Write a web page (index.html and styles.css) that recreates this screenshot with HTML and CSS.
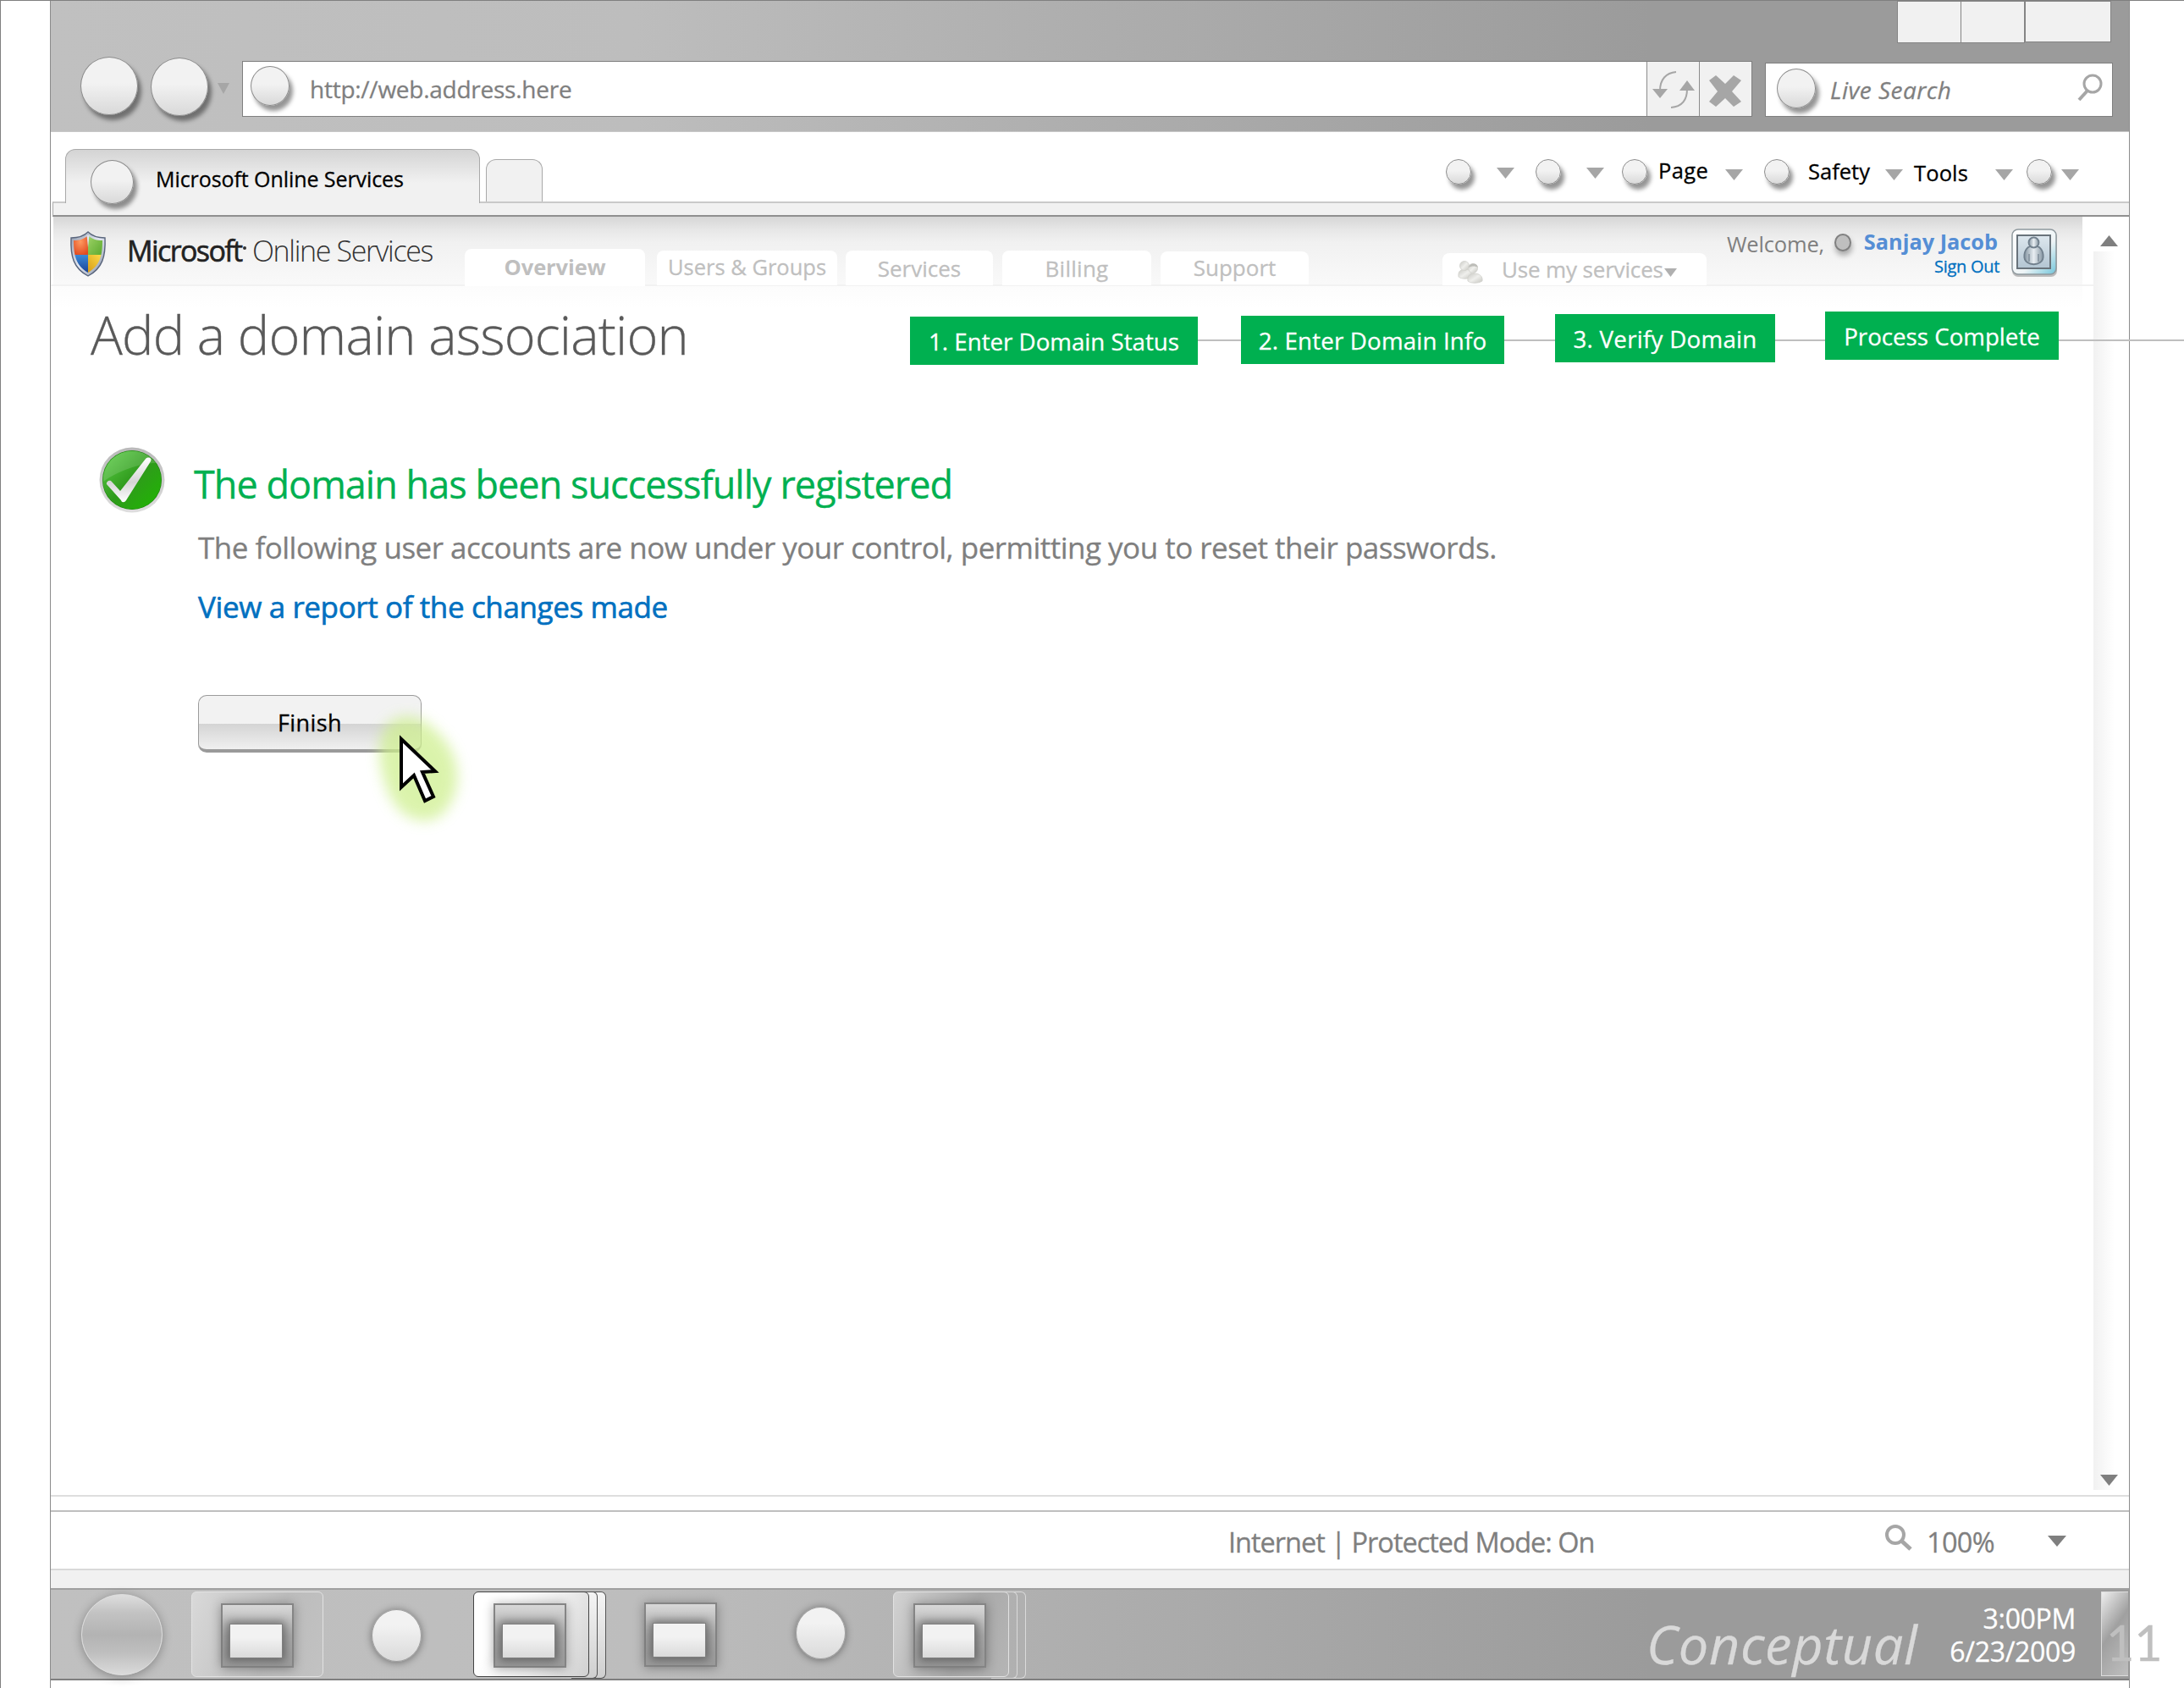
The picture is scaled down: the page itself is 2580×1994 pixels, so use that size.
FILE: index.html
```html
<!DOCTYPE html>
<html lang="en">
<head>
<meta charset="utf-8">
<title>Microsoft Online Services</title>
<link rel="stylesheet" href="styles.css">
</head>
<body>
<div class="window">
  <header class="chrome">
    <div class="caption-buttons"><i></i><i></i><i class="wide"></i></div>
    <div class="address-row">
      <i class="orb orb-nav back"></i>
      <i class="orb orb-nav forward"></i>
      <i class="tri nav-tri"></i>
      <div class="address">
        <i class="orb orb-field"></i>
        <span class="url">http://web.address.here</span>
        <div class="address-btn">
          <svg width="61" height="64" viewBox="0 0 61 64" fill="none" stroke="#a6a6a6" stroke-width="2"><path d="M34 12C22 13 15 21 15 34M28 54c13-1 19-9 19-22"/><path fill="#a6a6a6" stroke="none" d="M6 32h18l-9 11zM38 34h18l-9-12z"/></svg>
        </div>
        <div class="address-btn">
          <svg width="61" height="64" viewBox="0 0 61 64"><path d="M11 22l8-6 11 10 10-10 9 6-11 13 11 12-9 6-10-10-11 10-8-6 10-12z" fill="#a6a6a6"/></svg>
        </div>
      </div>
      <div class="search">
        <i class="orb orb-field"></i>
        <span class="search-text">Live Search</span>
        <svg class="search-icon" width="32" height="34" viewBox="0 0 32 34" fill="none" stroke="#a6a6a6"><circle cx="18" cy="12" r="10" stroke-width="3"/><path d="M12 20L2 31" stroke-width="4"/></svg>
      </div>
    </div>
  </header>

  <div class="tabbar">
    <div class="tab-active"><i class="orb orb-tab"></i><span class="tab-title">Microsoft Online Services</span></div>
    <div class="tab-new"></div>
    <div class="commands">
      <i class="orb orb-cmd c1"></i><i class="tri t1"></i>
      <i class="orb orb-cmd c2"></i><i class="tri t2"></i>
      <i class="orb orb-cmd c3"></i><span class="cmd page">Page</span><i class="tri t3"></i>
      <i class="orb orb-cmd c4"></i><span class="cmd safety">Safety</span><i class="tri t4"></i>
      <span class="cmd tools">Tools</span><i class="tri t5"></i>
      <i class="orb orb-cmd c5"></i><i class="tri t6"></i>
    </div>
  </div>
  <div class="strip"></div>

  <div class="viewport">
    <div class="page-col">
      <div class="site-header">
        <svg class="shield" width="44" height="54" viewBox="0 0 44 54">
          <defs>
            <clipPath id="sh"><path d="M22 5c5 5 11 6 17 6 0 18-3 30-17 38C8 41 5 29 5 11c6 0 12-1 17-6z"/></clipPath>
            <linearGradient id="rim" x1="0" y1="0" x2="1" y2="1"><stop offset="0" stop-color="#8f98ab"/><stop offset=".5" stop-color="#e4e9f3"/><stop offset="1" stop-color="#7d889d"/></linearGradient>
            <radialGradient id="red" cx=".5" cy=".35" r=".7"><stop offset="0" stop-color="#ff9a60"/><stop offset="1" stop-color="#e04a20"/></radialGradient>
            <linearGradient id="blu" x1="0" y1="0" x2="0" y2="1"><stop offset="0" stop-color="#3a8ad8"/><stop offset="1" stop-color="#1a3f93"/></linearGradient>
            <linearGradient id="yel" x1="1" y1="0" x2="0" y2="1"><stop offset="0" stop-color="#ffe04a"/><stop offset="1" stop-color="#d69a18"/></linearGradient>
            <linearGradient id="grn" x1="0" y1="0" x2="1" y2="1"><stop offset="0" stop-color="#a0d468"/><stop offset="1" stop-color="#5aa82e"/></linearGradient>
          </defs>
          <path d="M22 1c6 6 13 7 20 7 1 22-3 36-20 45C5 44 1 30 2 8c7 0 14-1 20-7z" fill="url(#rim)" stroke="#59657c" stroke-width="1.4"/>
          <g clip-path="url(#sh)"><path fill="url(#red)" d="M4 4h18v24H4z"/><path fill="url(#grn)" d="M22 4h18v24H22z"/><path fill="url(#blu)" d="M4 28h18v22H4z"/><path fill="url(#yel)" d="M22 28h18v22H22z"/></g>
          <path d="M20.500 5h3l-1.500 14z" fill="#dfe5ef"/>
        </svg>
        <span class="brand-ms">Microsoft</span>
        <span class="brand-os">Online Services</span>
        <nav class="site-tabs">
          <span class="stab overview"><span>Overview</span></span>
          <span class="stab users"><span>Users &amp; Groups</span></span>
          <span class="stab services"><span>Services</span></span>
          <span class="stab billing"><span>Billing</span></span>
          <span class="stab support"><span>Support</span></span>
        </nav>
        <div class="stab mine">
          <svg width="32" height="28" viewBox="0 0 32 28">
            <defs><linearGradient id="ppl" x1="0" y1="0" x2="1" y2="1"><stop offset="0" stop-color="#c8c8c3"/><stop offset=".5" stop-color="#efefec"/><stop offset="1" stop-color="#c6c6c0"/></linearGradient></defs>
            <g fill="url(#ppl)" stroke="#d0d0cb" stroke-width=".8"><path d="M2 20c-1-7 3-9 8-9s8 2 8 9c-5 3-12 3-16 0z"/><circle cx="9" cy="7" r="5.500"/><path d="M13 25c-1-7 3-9 8-9s10 3 9 9c-5 3-13 3-17 0z"/><circle cx="19" cy="10" r="5.500"/></g>
            <path d="M14 9c0-5 10-7 11 0-3-2-8-2-11 0z" fill="#bdbdb8"/>
          </svg>
          <span>Use my services</span><i class="tri tri-mine"></i>
        </div>
        <span class="welcome">Welcome,</span>
        <i class="presence"></i>
        <div class="who"><span class="who-name">Sanjay Jacob</span><span class="signout">Sign Out</span></div>
        <svg class="avatar" width="58" height="60" viewBox="0 0 58 60">
          <defs>
            <linearGradient id="av" x1="0" y1="0" x2="1" y2="1"><stop offset="0" stop-color="#fff"/><stop offset=".6" stop-color="#eef4f6"/><stop offset="1" stop-color="#6fc4da"/></linearGradient>
            <linearGradient id="avb" x1="0" y1="0" x2="0" y2="1"><stop offset="0" stop-color="#dde7ee"/><stop offset="1" stop-color="#b3c5d2"/></linearGradient>
            <linearGradient id="avp" x1="0" y1="0" x2="1" y2="0"><stop offset="0" stop-color="#8494a1"/><stop offset=".5" stop-color="#e8eef2"/><stop offset="1" stop-color="#8494a1"/></linearGradient>
          </defs>
          <rect x="2" y="3" width="53" height="55" rx="7" fill="#bdbdbd"/>
          <rect x="2" y="2" width="52" height="53" rx="7" fill="url(#av)" stroke="#8f999e" stroke-width="1.500"/>
          <rect x="8" y="9" width="39" height="39" fill="url(#avb)" stroke="#69737b" stroke-width="2"/>
          <g fill="url(#avp)" stroke="#71808d" stroke-width="1.800"><path d="M21 23c-5 4-7 14-1 18 4 3 11 3 15 0 6-4 4-14-1-18-4-2-9-2-13 0z"/><path d="M22 40V31M33 40V31" fill="none" stroke-width="1.200"/><circle cx="27.500" cy="17.500" r="6"/></g>
        </svg>
      </div>

      <div class="title-row">
        <h1>Add a domain association</h1>
        <div class="step s1"><span>1. Enter Domain Status</span></div>
        <div class="step s2"><span>2. Enter Domain Info</span></div>
        <div class="step s3"><span>3. Verify Domain</span></div>
        <div class="step s4"><span>Process Complete</span></div>
      </div>

      <main class="result">
        <svg class="ok" width="80" height="80" viewBox="0 0 80 80">
          <defs>
            <linearGradient id="g1" x1="0" y1="0" x2="1" y2="1"><stop offset="0" stop-color="#5fd04a"/><stop offset=".5" stop-color="#2f9a1c"/><stop offset="1" stop-color="#1fb800"/></linearGradient>
            <linearGradient id="g2" x1="0" y1="0" x2="0" y2="1"><stop offset="0" stop-color="#b9b9b9"/><stop offset="1" stop-color="#dedede"/></linearGradient>
            <linearGradient id="g3" x1="0" y1="0" x2="0" y2="1"><stop offset="0" stop-color="#fff"/><stop offset=".55" stop-color="#d5d5d5"/><stop offset="1" stop-color="#fff"/></linearGradient>
          </defs>
          <circle cx="39" cy="40" r="38.500" fill="url(#g2)"/><circle cx="39" cy="40" r="35" fill="#1b7d0c"/><circle cx="39" cy="40" r="34.500" fill="url(#g1)"/>
          <path d="M5 42C5 20 21 6 39 6c12 0 22 5 28 14C49 20 21 30 5 42z" fill="#fff" opacity=".14"/>
          <path d="M9 45c-1-3 4-6 6-3l10 11L55 15c3-3 8-1 6 3L32 64c-2 3-5 3-6 0z" fill="url(#g3)"/>
        </svg>
        <div class="result-body">
          <h2>The domain has been successfully registered</h2>
          <p class="sub">The following user accounts are now under your control, permitting you to reset their passwords.</p>
          <a class="report">View a report of the changes made</a>
          <button class="finish"><span>Finish</span></button>
        </div>
      </main>
    </div>
    <div class="scroll"><i class="up"></i><div class="track"></div><i class="down"></i></div>
  </div>

  <div class="gap"></div>
  <div class="status">
    <span class="zone">Internet | Protected Mode: On</span>
    <svg class="zoom-icon" width="34" height="32" viewBox="0 0 34 32" fill="none" stroke="#a6a6a6"><circle cx="13" cy="12" r="10" stroke-width="4"/><path d="M19 18l12 11" stroke-width="5"/></svg>
    <span class="zoom-level">100%</span>
    <i class="tri dark"></i>
  </div>
  <div class="band"></div>

  <footer class="taskbar">
    <i class="start"></i>
    <div class="task framed"><i class="app"><b></b></i></div>
    <i class="dot d1"></i>
    <div class="task stack active"><i class="app"><b></b></i></div>
    <i class="app bare"><b></b></i>
    <i class="dot d2"></i>
    <div class="task stack"><i class="app"><b></b></i></div>
    <span class="conceptual">Conceptual</span>
    <div class="clock"><span class="time">3:00PM</span><span class="date">6/23/2009</span></div>
    <i class="desktop"></i>
  </footer>
</div>
<i class="connector"></i>
<svg class="cursor" width="140" height="180" viewBox="0 0 140 180">
  <defs><filter id="soft" x="-40%" y="-40%" width="180%" height="180%"><feGaussianBlur stdDeviation="8"/></filter></defs>
  <path d="M30 24C52 6 78 22 95 44s22 54 4 80-50 16-64-6S8 44 30 24z" fill="#cdef8c" opacity=".72" filter="url(#soft)"/>
  <path d="M44 43v57l15-14 13 30 10-5-13-29 15-1z" fill="#fff" stroke="#000" stroke-width="4"/>
</svg>
<span class="page-number">11</span>
</body>
</html>
```
FILE: styles.css
```css
* { box-sizing: border-box; }
html, body { margin: 0; padding: 0; }
body {
  position: relative;
  width: 2580px;
  height: 1994px;
  overflow: hidden;
  background: #fff;
  border-top: 1px solid #7f7f7f;
  border-left: 1px solid #7f7f7f;
  font-family: "Open Sans", "Noto Sans", sans-serif;
  line-height: 1.4;
  -webkit-text-stroke: .3px currentColor;
}
i { display: block; flex: none; font-style: normal; }
svg { display: block; flex: none; }
span { white-space: nowrap; }
h1, h2, p { margin: 0; white-space: nowrap; }

.window {
  margin-left: 58px;
  width: 2457px;
  height: 1993px;
  border-left: 1px solid #8c8c8c;
  border-right: 1px solid #8c8c8c;
}

/* glossy placeholder circles */
.orb {
  border-radius: 50%;
  border: 1px solid #8c8c8c;
  background: linear-gradient(#f2f2f2 45%, #d9d9d9);
  box-shadow: 4px 6px 5px rgba(0, 0, 0, .42);
}
.orb-nav { width: 68px; height: 69px; }
.orb-field { width: 46px; height: 47px; }
.orb-tab { width: 51px; height: 52px; }
.orb-cmd { width: 30px; height: 30px; }
.tri {
  width: 21px;
  height: 13px;
  background: #a6a6a6;
  clip-path: polygon(0 0, 100% 0, 50% 100%);
}
.tri.dark { background: #7f7f7f; }

/* title bar and address row */
.chrome {
  height: 155px;
  border-bottom: 1px solid #c8c8c8;
  background: linear-gradient(90deg, #c0c0c0 0, #bdbdbd 28%, #9b9b9b 77%, #9b9b9b);
}
.caption-buttons { display: flex; justify-content: flex-end; height: 66px; padding-right: 21px; }
.caption-buttons i { width: 76px; height: 50px; margin-right: -1px; background: #f1f1f1; border: 1.500px solid #858585; }
.caption-buttons .wide { width: 102px; height: 49px; margin: 0 0 0 1px; }
.address-row { display: flex; align-items: flex-start; }
.back { margin-left: 35px; }
.forward { margin: 1px 0 0 15px; }
.nav-tri { width: 14px; margin: 31px 0 0 11px; }
.address { display: flex; width: 1784px; height: 66px; margin: 5px 0 0 15px; background: #fff; border: 1px solid #7f7f7f; }
.address .orb { margin: 5px 0 0 9px; }
.url { width: 1579px; margin: 13px 0 0 24px; font-size: 28px; letter-spacing: -.009em; color: #7f7f7f; }
.address-btn { width: 62px; height: 64px; background: #f1f1f1; border-left: 1px solid #8c8c8c; }
.search { display: flex; width: 411px; height: 64px; margin: 7px 0 0 15px; background: #fff; border: 1px solid #7f7f7f; }
.search .orb { margin: 6px 0 0 13px; }
.search-text { width: 292px; margin: 12px 0 0 17px; font-size: 28px; letter-spacing: .0165em; font-style: italic; color: #7f7f7f; }
.search-icon { margin: 12px 0 0; }

/* tabs and commands */
.tabbar { display: flex; align-items: flex-start; height: 82px; }
.tab-active {
  display: flex;
  position: relative;
  z-index: 1;
  width: 490px;
  height: 64px;
  margin: 20px 0 0 17px;
  border: 1px solid #a9a9a9;
  border-bottom: 0;
  border-radius: 12px 12px 0 0;
  background: linear-gradient(#d4d4d4, #f1f1f1 62%);
}
.tab-active .orb { margin: 12px 0 0 29px; }
.tab-title { margin: 17px 0 0 26px; font-size: 25px; letter-spacing: -.003em; }
.tab-new { width: 67px; height: 50px; margin: 32px 0 0 7px; background: #f1f1f1; border: 1px solid #a9a9a9; border-bottom: 0; border-radius: 12px 12px 0 0; }
.commands { display: flex; align-items: flex-start; margin-left: 1067px; }
.orb-cmd { margin-top: 32px; }
.cmd { font-size: 25.500px; }
.t1 { margin: 42px 25px 0 30px; }
.t2 { margin: 42px 22px 0 30px; }
.c3 { margin-left: -1px; }
.page { width: 79px; margin: 28px 0 0 13px; letter-spacing: .014em; }
.t3 { margin: 44px 26px 0 0; }
.c4 { margin-left: -1px; }
.safety { width: 91px; margin: 29px 0 0 22px; }
.t4 { margin: 44px 13px 0 0; }
.tools { width: 96px; margin-top: 31px; letter-spacing: .005em; }
.t5 { margin: 44px 17px 0 0; }
.c5 { margin-left: -1px; }
.t6 { margin: 44px 0 0 11px; }
.strip { height: 18px; margin-left: 2px; background: #f1f1f1; border-top: 2px solid #c9c9c9; border-bottom: 2px solid #8f8f8f; border-left: 1px solid #a9a9a9; }

/* page viewport */
.viewport { display: flex; height: 1510px; }
.page-col { width: 2413px; }
.site-header {
  display: flex;
  align-items: flex-start;
  height: 82px;
  border-bottom: 2px solid #f2f2f2;
  background: linear-gradient(#d6d6d6 0, #e6e6e6 18%, #f1f1f1 38%, #f9f9f9) 3px 0 / 2397px 100% no-repeat;
}
.shield { margin: 17px 0 0 22px; }
.brand-ms { display: flex; width: 148px; margin: 17px 0 0 24px; font-size: 34px; letter-spacing: -.047em; color: #222; -webkit-text-stroke: .6px #222; }
.brand-ms::after { content: ""; width: 4px; height: 4px; margin: 18px 0 0 1px; border-radius: 50%; background: #333; }
.brand-os { width: 251px; margin: 17px 0 0; font-size: 34px; letter-spacing: -.04em; font-weight: 300; color: #333; -webkit-text-stroke: 0; }
.site-tabs { display: flex; align-items: flex-start; width: 1155px; }
.stab { display: flex; justify-content: center; height: 41px; margin-top: 40px; background: #fff; border-radius: 8px 8px 0 0; font-size: 26px; color: #bfbfbf; }
.overview { width: 213px; height: 44px; margin: 38px 14px 0 0; padding-top: 4px; font-size: 25.500px; letter-spacing: -.003em; font-weight: 700; -webkit-text-stroke: 0; }
.users { width: 213px; margin-right: 10px; padding-top: 2px; font-size: 25.500px; }
.services { width: 174px; margin-right: 11px; padding-top: 3px; }
.billing { width: 176px; margin-right: 11px; padding-top: 3px; letter-spacing: .01em; }
.support { width: 175px; height: 39px; margin-top: 41px; padding-top: 1px; }
.mine { justify-content: flex-start; width: 312px; height: 38px; margin-top: 43px; padding: 0 0 0 17px; letter-spacing: -.006em; }
.mine svg { margin-top: 8px; }
.mine span { width: 192px; margin: 1px 0 0 21px; }
.tri-mine { width: 15px; height: 10px; margin-top: 18px; background: #b0b0b0; }
.welcome { width: 127px; margin: 15px 0 0 24px; font-size: 25.500px; letter-spacing: -.007em; color: #7f7f7f; -webkit-text-stroke: 0; }
.presence { width: 20px; height: 21px; margin-top: 20px; border-radius: 50%; background: #bfbfbf; border: 2px solid #808080; box-shadow: 1px 5px 6px rgba(0, 0, 0, .3); }
.who { display: flex; flex-direction: column; align-items: flex-end; width: 176px; padding-right: 1px; margin-top: 12px; }
.who-name { margin-right: 2px; font-size: 25.300px; line-height: 34px; font-weight: 700; color: #558ed5; -webkit-text-stroke: 0; }
.signout { margin-top: -1px; font-size: 20px; line-height: 28px; letter-spacing: -.015em; color: #0070c0; }
.avatar { margin: 13px 0 0 12px; }

.title-row { display: flex; align-items: flex-start; height: 164px; background: linear-gradient(#fcfcfc, #fff 26px) 3px 0 / 2397px 26px no-repeat; }
h1 { width: 968px; margin: 13px 0 0 47px; font-size: 63px; letter-spacing: -.0135em; font-weight: 300; color: #595959; }
.step { position: relative; z-index: 1; display: flex; justify-content: center; height: 57px; padding-top: 10px; background: #00b050; color: #fff; font-size: 27.700px; }
.s1 { width: 340px; margin: 36px 51px 0 0; }
.s2 { width: 311px; margin: 35px 60px 0 0; letter-spacing: .006em; }
.s3 { width: 260px; margin: 33px 59px 0 0; letter-spacing: .01em; }
.s4 { width: 276px; margin: 30px 0 0; }

.result { display: flex; align-items: flex-start; padding: 25px 0 0 57px; }
.result-body { display: flex; flex-direction: column; align-items: flex-start; padding: 13px 0 0 37px; }
h2 { margin-left: -5px; font-size: 45px; line-height: 63px; letter-spacing: -.0215em; font-weight: 400; color: #00b050; }
.sub { margin-top: 19px; font-size: 35px; line-height: 49px; letter-spacing: -.0145em; color: #7f7f7f; }
.report { margin-top: 21px; font-size: 35px; line-height: 49px; letter-spacing: -.011em; color: #0070c0; white-space: nowrap; -webkit-text-stroke: .6px #0070c0; }
.finish {
  display: flex;
  justify-content: center;
  width: 264px;
  height: 68px;
  margin-top: 80px;
  padding: 13px 0 0;
  border: 1px solid #9b9b9b;
  border-bottom: 4px solid #9a9a9a;
  border-radius: 10px;
  background: linear-gradient(#f2f2f2 0 0) 0 0 / 100% 33px no-repeat, linear-gradient(#d4d4d4 33px, #f0f0f0);
  font: 27px/1.4 "Open Sans", sans-serif;
  letter-spacing: .015em;
  color: #000;
}

.scroll { display: flex; flex-direction: column; width: 42px; }
.up, .down { width: 21px; height: 13px; margin-left: 8px; background: #7f7f7f; }
.up { margin-top: 22px; clip-path: polygon(50% 0, 100% 100%, 0 100%); }
.down { margin-top: -18px; clip-path: polygon(0 0, 100% 0, 50% 100%); }
.track { height: 1463px; margin-top: 6px; background: linear-gradient(90deg, #f1f1f1, #fff 25px); }

/* status bar */
.gap { height: 18px; border-top: 2px solid #dedede; }
.status { display: flex; align-items: flex-start; height: 69px; border-top: 2px solid #bfbfbf; color: #7f7f7f; font-size: 32.500px; }
.zone { width: 772px; margin: 13px 0 0 1391px; letter-spacing: -.031em; }
.zoom-icon { margin: 15px 0 0 3px; }
.zoom-level { width: 143px; margin: 13px 0 0 16px; letter-spacing: -.021em; }
.status .tri { width: 22px; margin-top: 28px; }
.band { height: 23px; background: #f1f1f1; border-top: 2px solid #d9d9d9; }

/* taskbar */
.taskbar { position: relative; z-index: 0; display: flex; align-items: flex-start; height: 109px; border-top: 2px solid #a0a0a0; border-bottom: 2px solid #7f7f7f; background: linear-gradient(90deg, #c0c0c0 0, #bdbdbd 28%, #9b9b9b 77%, #9b9b9b); }
.start { width: 96px; height: 96px; margin: 5px 0 0 36px; border-radius: 50%; border: 1px solid #ddd; background: linear-gradient(#dedede, #c3c3c3 22%, #b3b3b3 50%, #bebebe 72%, #dadada); box-shadow: 0 2px 12px rgba(0, 0, 0, .3); }
.task { position: relative; height: 101px; margin-top: 2px; border: 1px solid #e2e2e2; border-radius: 6px; }
.framed { width: 156px; margin-left: 34px; padding: 13px 0 0 34px; background: linear-gradient(110deg, #d9d9d9, #bcbcbc 60%, #c2c2c2); }
.app { width: 86px; height: 76px; padding: 22px 0 0 8px; border: 2px solid #858585; background: linear-gradient(#d8d8d8, #a9a9a9 50%, #9b9b9b); box-shadow: 0 1px 12px rgba(0, 0, 0, .32); }
.app b { display: block; width: 63px; height: 41px; border: 1px solid #808080; background: linear-gradient(#f2f2f2 40%, #dadada); box-shadow: 0 0 10px 3px rgba(0, 0, 0, .38); }
.dot { width: 59px; height: 62px; border-radius: 50%; background: linear-gradient(#f2f2f2 30%, #dadada); border: 1px solid #a0a0a0; box-shadow: 0 1px 10px rgba(0, 0, 0, .42); }
.d1 { margin: 23px 0 0 57px; }
.stack { width: 137px; padding: 13px 0 0 23px; background: linear-gradient(110deg, #d2d2d2, #a9a9a9 60%, #b5b5b5); }
.stack::before, .stack::after { content: ""; position: absolute; z-index: -1; top: -1px; height: 101px; width: 30px; border: 1px solid #dadada; border-left: 0; border-radius: 0 6px 6px 0; }
.stack::before { right: -11px; }
.stack::after { right: -21px; z-index: -2; }
.active { margin-left: 61px; border-color: #444; background: linear-gradient(115deg, #fff 25%, #eee 60%, #d0d0d0); }
.active::before, .active::after { border-color: #555; background: linear-gradient(#f5f5f5, #cfcfcf); }
.bare { margin: 15px 0 0 65px; }
.d2 { margin: 20px 0 0 93px; }
.d2 + .stack { margin-left: 56px; }
.conceptual { width: 396px; margin: 20px 0 0 753px; font-size: 63px; letter-spacing: .011em; font-style: italic; color: #d9d9d9; line-height: 87px; }
.clock { display: flex; flex-direction: column; align-items: flex-end; width: 111px; margin-top: 14px; color: #fff; font-size: 32px; line-height: 39px; letter-spacing: -.01em; }
.desktop { width: 32px; height: 100px; margin: 2px 0 0 30px; border: 1px solid #ddd; border-right: 0; background: linear-gradient(125deg, #eee, #a0a0a0 45%, #bfbfbf); }

/* things lying over the window */
.connector { position: absolute; left: 1414px; top: 400px; width: 1165px; height: 2px; background: #bfbfbf; }
.cursor { position: absolute; left: 429px; top: 829px; }
.page-number { position: absolute; left: 2487px; top: 1898px; font: 57.500px/81px Lato, sans-serif; color: #bfbfbf; }
```
